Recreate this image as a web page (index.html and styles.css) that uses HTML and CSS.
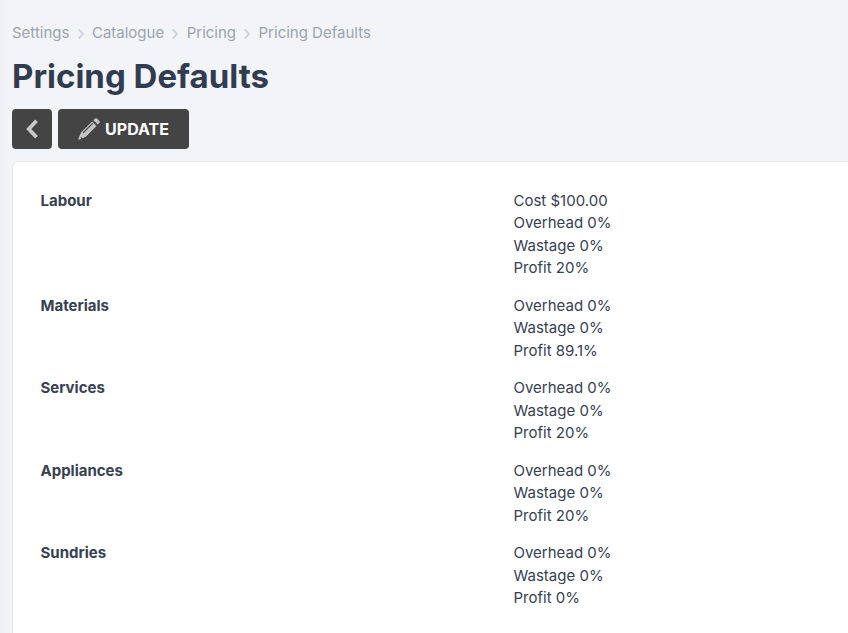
FILE: index.html
```html
<!DOCTYPE html>
<html lang="en">
<head>
<meta charset="utf-8">
<title>Pricing Defaults</title>
<link rel="stylesheet" href="styles.css">
</head>
<body>
<main class="page">
  <nav class="crumbs">
    <a>Settings</a>
    <svg class="sep" viewBox="0 0 8 12"><path d="M1.800 1.500 6 6l-4.200 4.500" /></svg>
    <a>Catalogue</a>
    <svg class="sep" viewBox="0 0 8 12"><path d="M1.800 1.500 6 6l-4.200 4.500" /></svg>
    <a>Pricing</a>
    <svg class="sep" viewBox="0 0 8 12"><path d="M1.800 1.500 6 6l-4.200 4.500" /></svg>
    <a>Pricing Defaults</a>
  </nav>
  <h1 class="title">Pricing Defaults</h1>
  <div class="actions">
    <button class="btn btn-back" aria-label="Back">
      <svg class="chev" viewBox="0 0 12 20"><path d="M10.500 1.800 2.800 10l7.700 8.200" /></svg>
    </button>
    <button class="btn btn-update">
      <svg class="pencil" viewBox="0 0 22 22">
        <path class="pencil-fill" d="M16.800 0.800a1.800 1.800 0 0 1 2.500 0l1.900 1.900a1.800 1.800 0 0 1 0 2.500L19.800 6.600 15.400 2.200ZM14.100 3.500l4.400 4.400L7.800 18.800 1.200 21.800 0.200 20.800 3.200 14.200Z" />
        <path class="pencil-line" d="M5 15 14.600 5.400M2.700 19.300l2 2" />
      </svg>
      <span>UPDATE</span>
    </button>
  </div>
  <section class="card">
    <div class="row"><div class="label">Labour</div><div class="vals"><div>Cost $100.00</div><div>Overhead 0%</div><div>Wastage 0%</div><div>Profit 20%</div></div></div>
    <div class="row"><div class="label">Materials</div><div class="vals"><div>Overhead 0%</div><div>Wastage 0%</div><div>Profit 89.1%</div></div></div>
    <div class="row"><div class="label">Services</div><div class="vals"><div>Overhead 0%</div><div>Wastage 0%</div><div>Profit 20%</div></div></div>
    <div class="row"><div class="label">Appliances</div><div class="vals"><div>Overhead 0%</div><div>Wastage 0%</div><div>Profit 20%</div></div></div>
    <div class="row"><div class="label">Sundries</div><div class="vals"><div>Overhead 0%</div><div>Wastage 0%</div><div>Profit 0%</div></div></div>
  </section>
</main>
</body>
</html>
```
FILE: styles.css
```css
* { box-sizing: border-box; }
html, body { margin: 0; height: 100%; overflow: hidden; }
body {
  background: #f2f4f8;
  font-family: Inter, "Liberation Sans", sans-serif;
  font-size: 15px;
  line-height: 22.500px;
  color: #374151;
}
.page {
  display: flex;
  flex-direction: column;
  height: 100%;
  padding: 22px 0 0 12px;
  box-shadow: inset 9px 0 9px -7px rgba(0, 0, 0, 0.035);
}
.crumbs { display: flex; align-items: center; color: #9ca3af; height: 23px; }
.sep { width: 8px; height: 12px; margin: 0 7.250px; fill: none; stroke: #d1d5db; stroke-width: 2; }
.title { margin: 11px 0 0; font-size: 33px; line-height: 40px; font-weight: 700; color: #323c50; }
.actions { display: flex; gap: 6px; margin-top: 13px; }
.btn {
  display: flex; align-items: center; justify-content: center;
  height: 40px; border: 0; border-radius: 4px;
  background: #444444; color: #fff; padding: 0;
  font: 700 16px/1 Inter, sans-serif;
}
.btn-back { width: 40px; }
.btn-update { width: 131px; gap: 5px; }
.chev { width: 12px; height: 20px; fill: none; stroke: #c8c8c8; stroke-width: 3.800; }
.pencil { width: 22px; height: 22px; }
.pencil-fill { fill: #c4c4c4; }
.pencil-line { fill: none; stroke: #444444; stroke-width: 1.100; }
.card {
  flex: 1;
  margin-top: 12px;
  padding: 27.750px 0 0 27.500px;
  background: #fff;
  border: 1px solid #e5e7eb;
  border-width: 1px 0 0 1px;
  border-radius: 6px 0 0 0;
}
.row { display: grid; grid-template-columns: 473px 1fr; margin-bottom: 15px; }
.label { font-weight: 700; }
```
